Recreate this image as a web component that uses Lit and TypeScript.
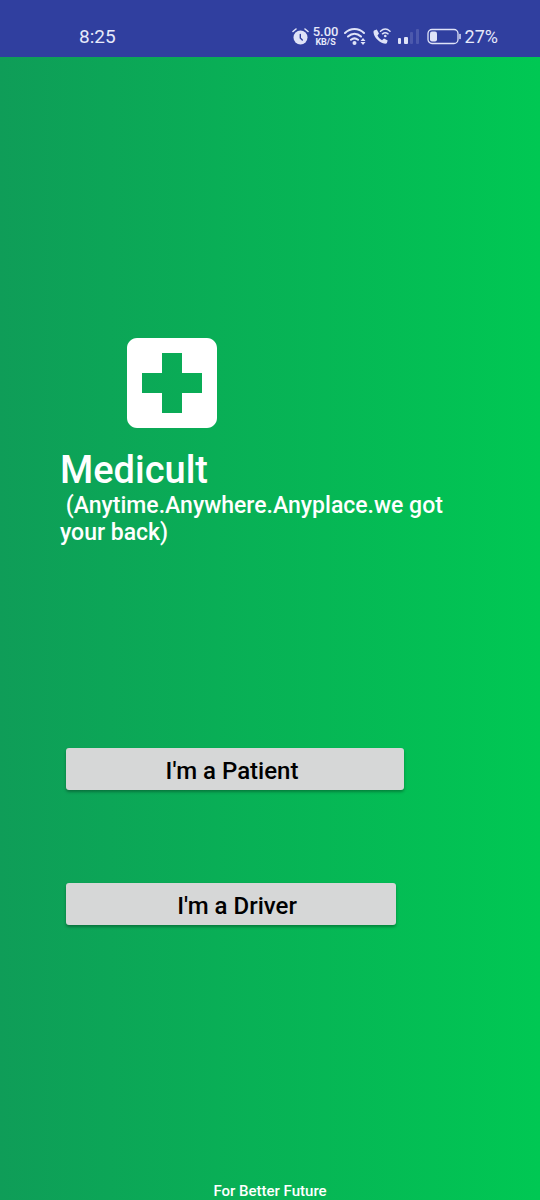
import { LitElement, html, css } from "lit";
import { customElement } from "lit/decorators.js";

@customElement("status-bar")
class StatusBar extends LitElement {
  static styles = css`
    :host {
      display: flex;
      align-items: center;
      justify-content: space-between;
      box-sizing: border-box;
      height: 57px;
      padding: 16px 42px 0 79px;
      background: #303f9f;
      color: #e6e9fa;
      font-family: Roboto, sans-serif;
      font-weight: 400;
      font-size: 19px;
      line-height: 20px;
    }
    .icons {
      display: flex;
      align-items: center;
    }
    .icons svg {
      display: block;
      fill: none;
      stroke: #dfe3f8;
    }
    .icons .solid {
      fill: #dfe3f8;
      stroke: none;
    }
    .icons .cut {
      stroke: #303f9f;
    }
    .icons .dim {
      fill: #4c59ad;
      stroke: none;
    }
    .speed {
      display: flex;
      flex-direction: column;
      align-items: center;
      width: 26px;
      margin: 0 5px 0 4px;
      font-weight: 500;
      font-size: 13px;
      line-height: 10px;
    }
    .unit {
      font-weight: 700;
      font-size: 9px;
      line-height: 10px;
    }
    .phone {
      margin-left: 7px;
    }
    .signal {
      margin: 0 8px 0 7px;
    }
    .percent {
      margin-left: 4px;
      font-size: 18px;
    }
  `;

  render() {
    return html`
      <span>8:25</span>
      <div class="icons">
        <svg width="17" height="20" viewBox="0 0 17 20" aria-label="Alarm">
          <circle class="solid" cx="8.5" cy="10.500" r="7" />
          <path d="M1 4.500 4 2M16 4.500 13 2" stroke-width="1.600" stroke-linecap="round" />
          <path class="cut" d="M8.300 7.500v3.500l2 2" stroke-width="1.400" stroke-linecap="round" />
        </svg>
        <div class="speed"><span>5.00</span><span class="unit">KB/S</span></div>
        <svg width="22" height="20" viewBox="0 0 22 20" aria-label="Wi-Fi">
          <path d="M1 6C6.500.7 14.500.7 20 6M4 9.600C8 5.900 13 5.900 17 9.600M7 12.800C9.300 10.900 11.700 10.900 14 12.800" stroke-width="2" stroke-linecap="round" />
          <circle class="solid" cx="10.500" cy="16" r="2" />
          <path class="solid" d="M19 11l2.500 3h-5zM19 18l2.500-3h-5z" />
        </svg>
        <svg class="phone" width="18" height="20" viewBox="0 0 18 20" aria-label="Wi-Fi calling">
          <path class="solid" d="M1 3.500 3.800 2.500 6 6.500 4.500 8.500C5.500 10.500 7 12 9 13.200L11 11.500 14.700 13.500 13.800 16.300C13 17 11.500 16.900 10 16.300 5 14.200 1.500 10.500.6 6 .4 5 .5 4 1 3.500Z" />
          <path d="M7.500 4.300C10.500 1.500 14 1.500 17 4.300M9.500 6.800C11.300 5.300 13.200 5.300 15 6.800" stroke-width="1.500" stroke-linecap="round" />
          <circle class="solid" cx="12.300" cy="9" r="1.300" />
        </svg>
        <svg class="signal" width="21" height="20" viewBox="0 0 21 20" aria-label="Signal">
          <rect class="solid" y="11" width="3" height="6" rx="1" />
          <rect class="solid" x="6" y="10" width="4" height="7" rx="1" />
          <rect class="dim" x="12" y="5" width="3" height="12" rx="1" />
          <rect class="dim" x="18" y="2" width="3" height="15" rx="1" />
        </svg>
        <svg width="34" height="20" viewBox="0 0 34 20" aria-label="Battery">
          <rect x="1" y="2.500" width="30" height="14" rx="4" stroke-width="1.300" />
          <rect class="solid" x="3" y="4.500" width="7" height="10" rx="2" />
          <path d="M33 7.500v4" stroke-width="1.500" stroke-linecap="round" />
        </svg>
        <span class="percent">27%</span>
      </div>
    `;
  }
}

@customElement("app-root")
class AppRoot extends LitElement {
  static styles = css`
    :host {
      display: flex;
      flex-direction: column;
      min-height: 100vh;
      background: linear-gradient(90deg, #0f9d58, #00c853);
      color: #fff;
      font-family: Roboto, sans-serif;
      font-weight: 500;
    }
    main {
      flex: 1;
      display: flex;
      flex-direction: column;
      align-items: flex-start;
      padding: 266px 60px 0;
    }
    .logo {
      display: block;
      width: 120px;
      height: 120px;
      margin-left: 52px;
      fill: #fff;
    }
    h1 {
      margin: 6px 0 0;
      font-weight: 500;
      font-size: 38px;
      line-height: 43px;
    }
    .tagline {
      max-width: 400px;
      margin: 0 0 202px;
      font-size: 23px;
      line-height: 27px;
    }
    button {
      height: 42px;
      margin: 0 0 93px 6px;
      padding: 4px 0 0;
      border: 0;
      border-radius: 3px;
      background: #d6d7d7;
      box-shadow: 0 2px 3px rgba(0, 0, 0, 0.3);
      color: #000;
      font: 500 24px/28px Roboto, sans-serif;
    }
    .patient {
      width: 338px;
      padding-right: 6px;
    }
    .driver {
      width: 330px;
      padding-left: 12px;
    }
    footer {
      font-size: 15px;
      line-height: 18px;
      text-align: center;
    }
  `;

  render() {
    return html`
      <status-bar></status-bar>
      <main>
        <svg class="logo" viewBox="0 0 24 24" aria-hidden="true">
          <path d="M19 3H5c-1.100 0-2 .9-2 2v14c0 1.100.9 2 2 2h14c1.100 0 2-.9 2-2V5c0-1.100-.9-2-2-2zm-1 11h-4v4h-4v-4H6v-4h4V6h4v4h4v4z" />
        </svg>
        <h1>Medicult</h1>
        <p class="tagline">&nbsp;(Anytime.Anywhere.Anyplace.we got your back)</p>
        <button class="patient" type="button">I'm a Patient</button>
        <button class="driver" type="button">I'm a Driver</button>
      </main>
      <footer>For Better Future</footer>
    `;
  }
}
